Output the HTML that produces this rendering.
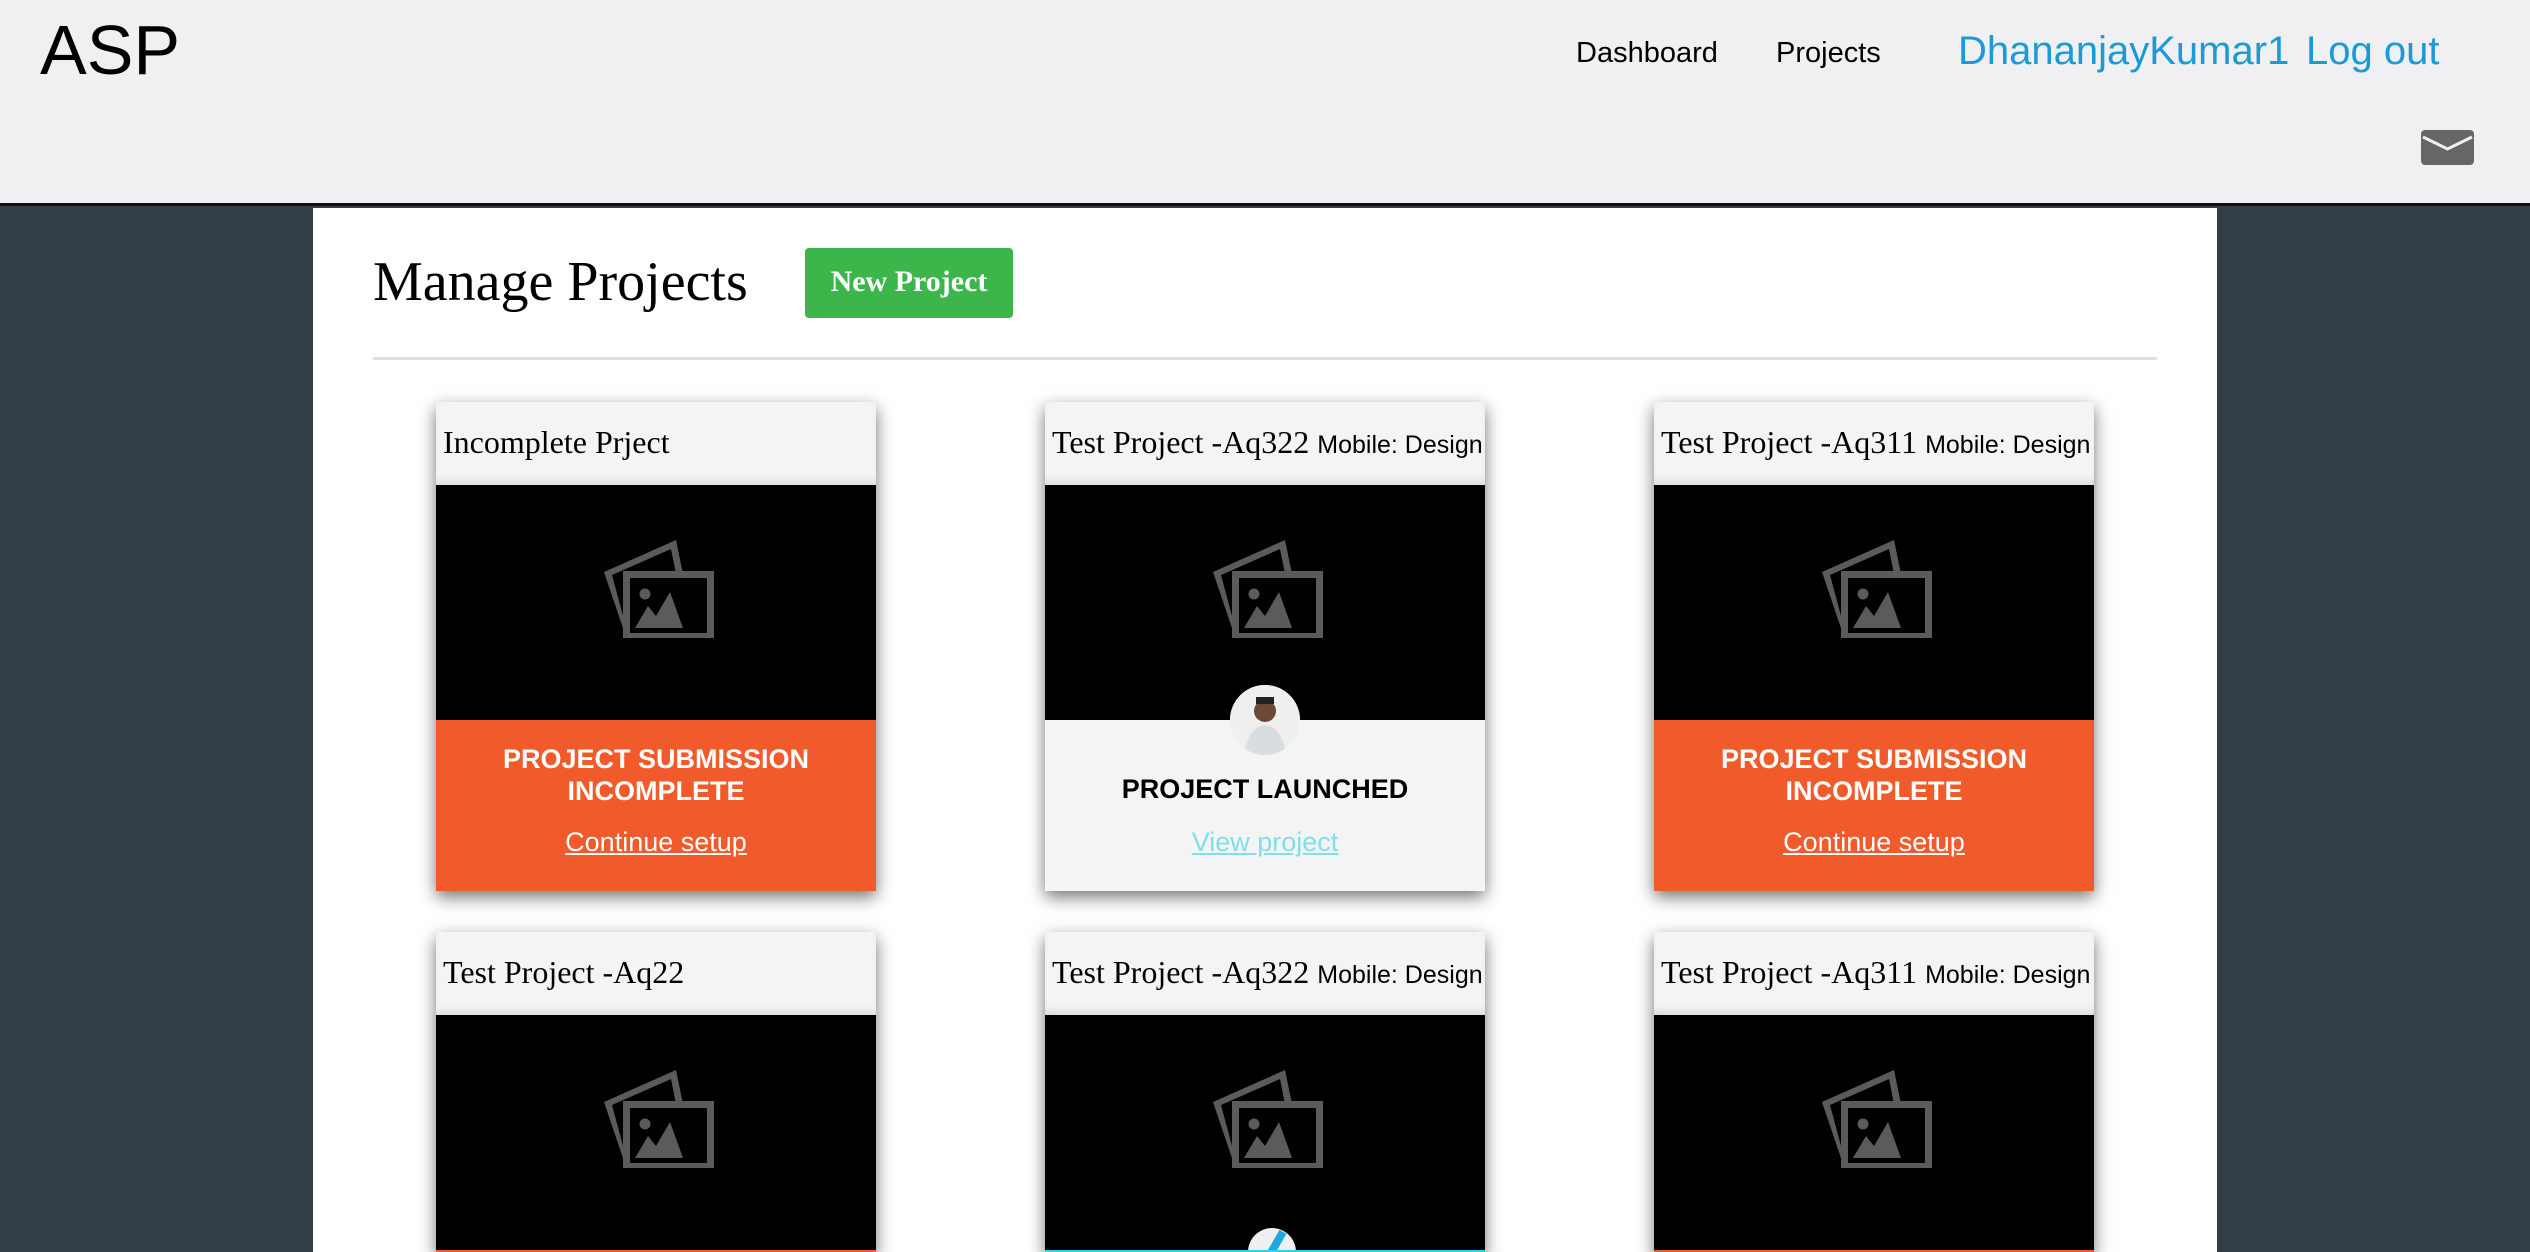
<!DOCTYPE html>
<html><head><meta charset="utf-8"><style>
*{margin:0;padding:0;box-sizing:border-box}
html,body{width:2530px;height:1252px;overflow:hidden}
body{background:#333d47;font-family:"Liberation Sans",sans-serif;position:relative}
.hdr{position:absolute;left:0;top:0;width:2530px;height:206px;background:#f0f0f2;border-bottom:3px solid #111}
.logo{position:absolute;left:40px;top:10px;font-size:70px;color:#000}
.nav{position:absolute;top:37px;font-size:29px;color:#000}
.blue{position:absolute;top:29px;font-size:40px;color:#1a9bd7}
.panel{position:absolute;left:313px;top:208px;width:1904px;height:1044px;background:#fff}
h1{position:absolute;left:373px;top:250px;font:normal 56px "Liberation Serif",serif;color:#000}
.btn{position:absolute;left:805px;top:248px;width:208px;height:70px;background:#3cb54a;color:#fff;font:bold 30px "Liberation Serif",serif;text-align:center;line-height:68px;border-radius:4px}
.hr{position:absolute;left:373px;top:357px;width:1784px;height:3px;background:#e0e0e0}
.card{position:absolute;width:440px;background:#000;box-shadow:0 6px 16px rgba(0,0,0,.55);overflow:visible}
.ch{height:83px;background:#f4f4f4;padding:0 7px;white-space:nowrap;font:32px "Liberation Serif",serif;line-height:80px;color:#000;box-shadow:0 -8px 10px -6px rgba(0,0,0,.15) inset}
.ch span{font:25px "Liberation Sans",sans-serif}
.img{height:235px;background:#000;position:relative}
.img svg{position:absolute;left:164px;top:51px}
.bot{height:171px;text-align:center;position:relative}
.or{background:#f15a2b;color:#fff}
.or b{display:block;font-size:27px;line-height:32px;padding-top:23px}
.or a{display:block;color:#fff;font-size:27px;text-decoration:underline;margin-top:20px}
.gr{background:#f4f4f4}
.gr b{display:block;font-size:27px;padding-top:54px;color:#000}
.gr a{display:block;color:#7fe0ea;font-size:27px;text-decoration:underline;margin-top:22px}
.av{position:absolute;left:185px;top:-35px;width:70px;height:70px;border-radius:50%;background:#fff;overflow:hidden}
</style></head><body>
<div class="hdr">
<div class="logo">ASP</div>
<div class="nav" style="left:1576px">Dashboard</div>
<div class="nav" style="left:1776px">Projects</div>
<div class="blue" style="left:1958px">DhananjayKumar1</div>
<div class="blue" style="left:2306px">Log out</div>
<svg style="position:absolute;left:2421px;top:130px" width="53" height="35" viewBox="0 0 53 35"><rect width="53" height="35" rx="4" fill="#666"/><path d="M2 7 L26.5 19 L51 7" stroke="#f0f0f2" stroke-width="3" fill="none"/></svg>
</div>
<div class="panel"></div>
<h1>Manage Projects</h1>
<div class="btn">New Project</div>
<div class="hr"></div>

<svg width="0" height="0" style="position:absolute"><defs><g id="ic"><polygon points="4,36 76,4 83,38 76,38 71,13 12,39 26,91 26,101 " fill="#5a5b5a"/><rect x="26.5" y="38.5" width="84" height="62" fill="none" stroke="#5a5b5a" stroke-width="7"/><circle cx="45" cy="58" r="5.5" fill="#5a5b5a"/><polygon points="35,92 48,70 56,80 70,56 83,92" fill="#5a5b5a"/></g></defs></svg>

<div class="card" style="left:436px;top:402px">
<div class="ch">Incomplete Prject</div>
<div class="img"><svg width="114" height="102" viewBox="0 0 114 102"><use href="#ic"/></svg></div>
<div class="bot or"><b>PROJECT SUBMISSION<br>INCOMPLETE</b><a>Continue setup</a></div>
</div>
<div class="card" style="left:1045px;top:402px">
<div class="ch">Test Project -Aq322 <span>Mobile: Design</span></div>
<div class="img"><svg width="114" height="102" viewBox="0 0 114 102"><use href="#ic"/></svg></div>
<div class="bot gr"><div class="av"><svg width="70" height="70"><rect width="70" height="70" fill="#eef0f0"/><circle cx="35" cy="26" r="11" fill="#6a4a36"/><rect x="26" y="12" width="18" height="7" fill="#222"/><path d="M14 70 Q18 42 35 40 Q52 42 56 70Z" fill="#d8dde0"/></svg></div><b>PROJECT LAUNCHED</b><a>View project</a></div>
</div>
<div class="card" style="left:1654px;top:402px">
<div class="ch">Test Project -Aq311 <span>Mobile: Design</span></div>
<div class="img"><svg width="114" height="102" viewBox="0 0 114 102"><use href="#ic"/></svg></div>
<div class="bot or"><b>PROJECT SUBMISSION<br>INCOMPLETE</b><a>Continue setup</a></div>
</div>

<div class="card" style="left:436px;top:932px">
<div class="ch">Test Project -Aq22</div>
<div class="img"><svg width="114" height="102" viewBox="0 0 114 102"><use href="#ic"/></svg></div>
<div style="height:4px;background:#f15a2b"></div>
</div>
<div class="card" style="left:1045px;top:932px">
<div class="ch">Test Project -Aq322 <span>Mobile: Design</span></div>
<div class="img"><svg width="114" height="102" viewBox="0 0 114 102"><use href="#ic"/></svg>
<div style="position:absolute;left:203px;top:213px;width:48px;height:48px;border-radius:50%;background:#eef0f0;overflow:hidden"><div style="position:absolute;left:24px;top:2px;width:8px;height:28px;background:#1fa8e0;transform:rotate(30deg)"></div></div></div>
<div style="height:4px;background:#2fd0f0;position:relative"></div>
</div>
<div class="card" style="left:1654px;top:932px">
<div class="ch">Test Project -Aq311 <span>Mobile: Design</span></div>
<div class="img"><svg width="114" height="102" viewBox="0 0 114 102"><use href="#ic"/></svg></div>
<div style="height:4px;background:#f15a2b"></div>
</div>
</body></html>
